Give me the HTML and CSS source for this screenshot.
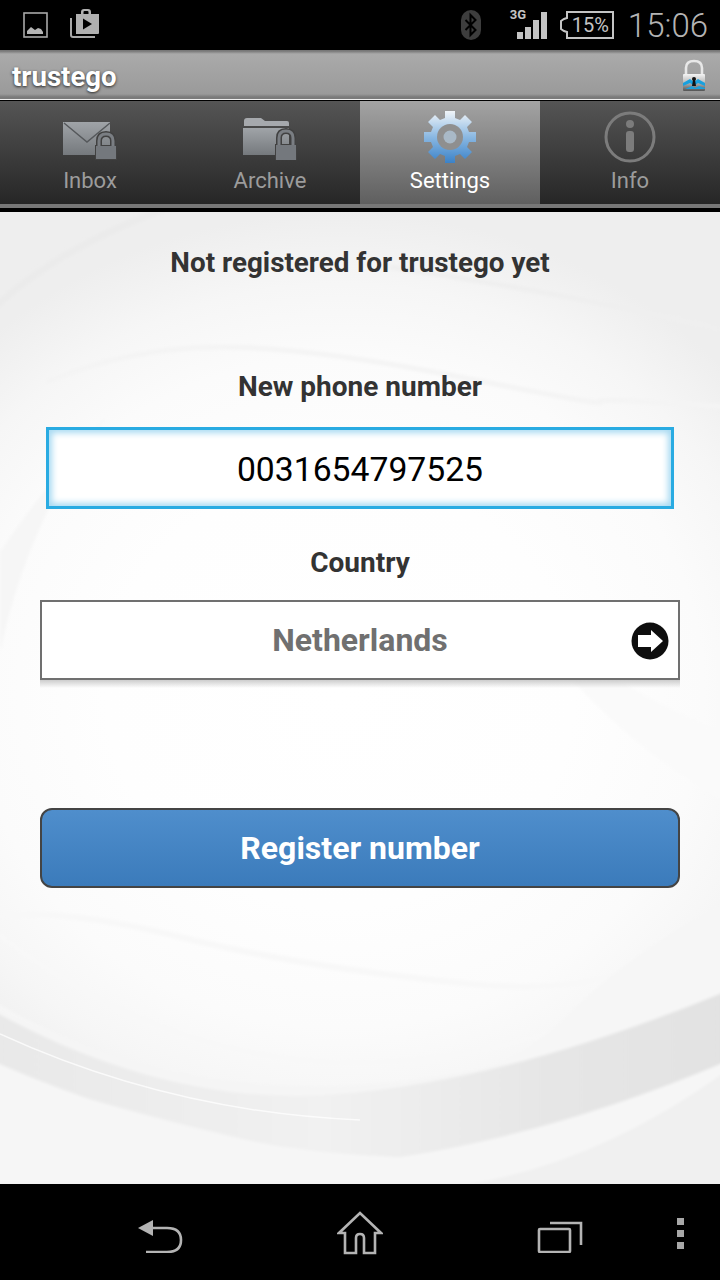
FILE: index.html
```html
<!DOCTYPE html>
<html lang="en">

<head>
    <meta charset="UTF-8" />
    <meta name="viewport" content="width=device-width, initial-scale=1.0" />
    <title>trustego</title>
    <link rel="stylesheet" href="styles.css">
</head>

<body>
    <div class="status_bar">
        <div class="status_left">
            <svg class="ic_picture" width="26" height="26" viewBox="0 0 26 26">
                <rect x="1" y="1" width="23" height="24" fill="none" stroke="#a8a8a8" stroke-width="1.600" />
                <path d="M4 22v-3l4-4 4 3 3-2 3 1 2 3v2z" fill="#b4b4b4" />
            </svg>
            <svg class="ic_store" width="32" height="32" viewBox="0 0 32 32">
                <path d="M2 10v17q0 2 2 2h22" fill="none" stroke="#a8a8a8" stroke-width="2" />
                <path d="M7 6h5V4q0-3 3-3h4q3 0 3 3v2h8v19q0 1-1 1H7z" fill="#b0b0b0" />
                <path d="M14.500 6V4q0-1 1-1h3q1 0 1 1v2z" fill="#000" />
                <path d="M14 10.500l9 5.500-9 5.500z" fill="#000" />
            </svg>
        </div>
        <div class="status_right">
            <svg width="20" height="30" viewBox="0 0 20 30">
                <rect x="0" y="0" width="20" height="30" rx="10" fill="#3d3d3d" />
                <path d="M4.500 10l10 10-5 5V5l5 5-10 10" fill="none" stroke="#000" stroke-width="2" />
            </svg>
            <div class="signal">
                <span class="signal_3g">3G</span>
                <svg width="38" height="30" viewBox="0 0 38 30">
                    <path d="M8 22h6v7H8zM16 17h6v12h-6zM24 10h6v19h-6zM32 2h6v27h-6z" fill="#c4c4c4" />
                </svg>
            </div>
            <div class="battery">
                <svg class="battery_shell" width="54" height="28" viewBox="0 0 54 28">
                    <path d="M7 1h46v26H7v-6l-3-1-3-2V10l3-2 3-1z" fill="none" stroke="#c4c4c4" stroke-width="2" />
                </svg>
                <span class="battery_text">15%</span>
            </div>
            <span class="clock">15:06</span>
        </div>
    </div>

    <header class="title_bar">
        <h1>trustego</h1>
        <svg class="ic_lock" width="26" height="34" viewBox="0 0 26 34">
            <defs>
                <linearGradient id="lockBody" x1="0" y1="0" x2="0" y2="1">
                    <stop offset="0" stop-color="#f4f4f4" />
                    <stop offset="0.45" stop-color="#c0c0c0" />
                    <stop offset="1" stop-color="#555" />
                </linearGradient>
            </defs>
            <path d="M4 16V9q0-7 8-7t8 7v7" fill="none" stroke="#e8e8e8" stroke-width="2.600" />
            <rect x="1" y="15" width="22" height="17" rx="1" fill="url(#lockBody)" />
            <path d="M1 24l7-4 4 3 4-3 7 4v3l-7-3-4 3-4-3-7 3zM3 30l7-3 3 2 4-2 6 2v1H3z" fill="#18a0de" />
            <circle cx="12" cy="20" r="2" fill="#111" />
            <path d="M11 21h2l1 6h-4z" fill="#111" />
        </svg>
    </header>

    <nav class="tabs">
        <div class="tab">
            <svg class="tab_icon" width="56" height="40" viewBox="0 0 56 40">
                <defs>
                    <linearGradient id="tabGray" x1="0" y1="0" x2="0" y2="1">
                        <stop offset="0" stop-color="#a0a4a8" />
                        <stop offset="1" stop-color="#75797d" />
                    </linearGradient>
                </defs>
                <path d="M1 2h47v33H1z" fill="url(#tabGray)" />
                <path d="M2 3l23 19 23-19" fill="none" stroke="#55585b" stroke-width="1.400" />
                <path d="M37 27v-6q0-7 7-7t7 7v6" fill="none" stroke="#414141" stroke-width="6" />
                <rect x="33" y="25" width="22" height="15" fill="#414141" />
                <path d="M37 27v-6q0-7 7-7t7 7v6" fill="none" stroke="#7a7e83" stroke-width="3" />
                <rect x="34" y="26" width="20" height="13" fill="#74787d" />
            </svg>
            <span>Inbox</span>
        </div>
        <div class="tab">
            <svg class="tab_icon" width="56" height="44" viewBox="0 0 56 44">
                <path d="M2 5q0-3 3-3h14l4 3h22q2 0 2 2v3H2z" fill="#a6a9ad" />
                <path d="M1 12h46v27H1z" fill="url(#tabGray)" />
                <path d="M37 30v-8q0-7 7-7t7 7v8" fill="none" stroke="#414141" stroke-width="6" />
                <rect x="33" y="28" width="22" height="16" fill="#414141" />
                <path d="M37 30v-8q0-7 7-7t7 7v8" fill="none" stroke="#7a7e83" stroke-width="3" />
                <rect x="34" y="29" width="20" height="15" fill="#74787d" />
            </svg>
            <span>Archive</span>
        </div>
        <div class="tab tab_active">
            <svg class="tab_icon icon_round" width="54" height="54" viewBox="0 0 54 54">
                <defs>
                    <linearGradient id="gearBlue" x1="0" y1="0" x2="0" y2="1">
                        <stop offset="0" stop-color="#f0f4f8" />
                        <stop offset="0.5" stop-color="#8ab8e2" />
                        <stop offset="1" stop-color="#3b82c8" />
                    </linearGradient>
                </defs>
                <path d="M22 1h10v7l5 2 5-5 7 7-5 5 2 5h7v10h-7l-2 5 5 5-7 7-5-5-5 2v7H22v-7l-5-2-5 5-7-7 5-5-2-5H1V22h7l2-5-5-5 7-7 5 5 5-2z" fill="url(#gearBlue)" />
                <circle cx="27" cy="27" r="13" fill="#8f8f8f" />
                <circle cx="27" cy="27" r="6.500" fill="#a9b9c7" />
            </svg>
            <span>Settings</span>
        </div>
        <div class="tab">
            <svg class="tab_icon icon_round" width="54" height="54" viewBox="0 0 54 54">
                <circle cx="27" cy="27" r="24" fill="none" stroke="#7c7c7c" stroke-width="3" />
                <circle cx="27" cy="14" r="4" fill="#7c7c7c" />
                <rect x="23" y="21" width="8" height="21" rx="3" fill="#7c7c7c" />
            </svg>
            <span>Info</span>
        </div>
    </nav>

    <main class="content">
        <svg class="swirl" width="720" height="972" viewBox="0 0 720 972">
            <defs>
                <radialGradient id="swirlBase" gradientUnits="userSpaceOnUse" cx="340" cy="480" r="1" gradientTransform="translate(340 480) scale(520 480) translate(-340 -480)">
                    <stop offset="0" stop-color="#fff" />
                    <stop offset="0.45" stop-color="#fefefe" />
                    <stop offset="0.7" stop-color="#fbfbfb" />
                    <stop offset="0.85" stop-color="#f6f6f6" />
                    <stop offset="1" stop-color="#eeeeee" />
                </radialGradient>
                <linearGradient id="swirlFade" x1="0" y1="0" x2="1" y2="0">
                    <stop offset="0" stop-color="#e8e8e8" />
                    <stop offset="0.45" stop-color="#f1f1f1" />
                    <stop offset="0.75" stop-color="#e6e6e6" />
                    <stop offset="1" stop-color="#e2e2e2" />
                </linearGradient>
                <filter id="swirlBlur" x="-5%" y="-5%" width="110%" height="110%">
                    <feGaussianBlur stdDeviation="1.500" />
                </filter>
            </defs>
            <rect width="720" height="972" fill="url(#swirlBase)" />
            <g filter="url(#swirlBlur)">
                <!-- upper swirls -->
                <path d="M-5 95Q60 35 170 -5" fill="none" stroke="#ebebeb" stroke-width="7" />
                <path d="M390 55Q560 80 725 118" fill="none" stroke="#efefef" stroke-width="5" />
                <path d="M46 170Q130 135 220 135T460 165T600 190T725 195" fill="none" stroke="#f4f4f4" stroke-width="5" />
                <path d="M0 440Q30 300 110 200Q40 280 0 340z" fill="#f6f6f6" />
                <path d="M520 400Q620 480 725 520V590Q600 520 520 400z" fill="#fafafa" />
                <!-- thin lower lines -->
                <path d="M-5 705Q60 695 180 725T470 772T725 700" fill="none" stroke="#f8f8f8" stroke-width="6" />
                <path d="M-5 720Q180 860 380 850T725 730" fill="none" stroke="#f8f8f8" stroke-width="5" />
                <!-- lower bands -->
                <path d="M-5 790Q150 880 320 880T560 810T725 690V780Q600 900 430 930T-5 830z" fill="#f6f6f6" />
                <path d="M-5 795Q140 870 300 874Q460 880 725 790V972H-5z" fill="#f5f5f5" />
                <path d="M-5 800Q150 885 300 884Q480 880 725 780V860Q560 970 430 960T-5 860z" fill="url(#swirlFade)" />
                <path d="M-5 850Q200 940 400 945Q560 920 725 850V972H-5z" fill="#f6f6f6" />
                <path d="M725 860Q600 950 470 972H725z" fill="#f0f0f0" />
            </g>
            <path d="M0 822Q170 900 360 908" fill="none" stroke="#fff" stroke-width="1.500" stroke-opacity="0.75" />
        </svg>

        <h2 class="intro">Not registered for trustego yet</h2>

        <label class="field_label label_phone">New phone number</label>
        <div class="phone_input">0031654797525</div>

        <label class="field_label label_country">Country</label>
        <div class="country_select">
            <span>Netherlands</span>
            <svg class="ic_arrow" width="38" height="38" viewBox="0 0 38 38">
                <circle cx="19" cy="19" r="18.500" fill="#0e0e0e" />
                <path d="M7 13h13V8l12 11-12 11v-5H7z" fill="#fff" />
            </svg>
        </div>

        <button class="register_btn">Register number</button>
    </main>

    <div class="nav_bar">
        <svg class="nav_icon nav_back" width="46" height="34" viewBox="0 0 46 34">
            <path d="M1 9L16 1v16z" fill="#b4b4b4" />
            <path d="M14 9h16q14 0 14 12t-14 12H9" fill="none" stroke="#b4b4b4" stroke-width="2.600" />
        </svg>
        <svg class="nav_icon nav_home" width="46" height="44" viewBox="0 0 46 44">
            <path d="M8 22H2L23 2l21 20h-6v20H27V27q0-4-4-4t-4 4v15H8z" fill="none" stroke="#b4b4b4" stroke-width="2.600" />
        </svg>
        <svg class="nav_icon nav_recent" width="46" height="32" viewBox="0 0 46 32">
            <rect x="2" y="8" width="31" height="23" rx="1" fill="none" stroke="#b4b4b4" stroke-width="2.600" />
            <path d="M13 2h31v22" fill="none" stroke="#b4b4b4" stroke-width="2.600" />
        </svg>
        <div class="nav_menu">
            <span></span>
            <span></span>
            <span></span>
        </div>
    </div>
</body>

</html>
```

FILE: styles.css
```css
body {
    margin: 0;
    width: 720px;
    height: 1280px;
    overflow: hidden;
    font-family: Roboto, sans-serif;
    background-color: #000;
}

/* status bar */
.status_bar {
    display: flex;
    justify-content: space-between;
    align-items: center;
    height: 50px;
    background-color: #000;
}

.status_left {
    display: flex;
    align-items: center;
    gap: 20px;
    padding-left: 23px;
}

.ic_store {
    margin-top: -2px;
}

.status_right {
    display: flex;
    align-items: center;
    padding-right: 12px;
}

.signal {
    position: relative;
    margin-left: 28px;
}

.signal svg {
    display: block;
}

.signal_3g {
    position: absolute;
    left: 1px;
    top: -3px;
    font-size: 13px;
    font-weight: bold;
    color: #c4c4c4;
}

.battery {
    position: relative;
    width: 54px;
    height: 28px;
    margin-left: 13px;
}

.battery_shell {
    display: block;
}

.battery_text {
    position: absolute;
    left: 12px;
    top: 0;
    line-height: 28px;
    font-size: 20px;
    color: #c4c4c4;
}

.clock {
    margin-left: 14px;
    font-size: 33px;
    font-weight: 300;
    color: #b4b4b4;
}

/* title bar */
.title_bar {
    display: flex;
    justify-content: space-between;
    align-items: center;
    box-sizing: border-box;
    height: 51px;
    padding: 2px 12px 0 12px;
    background: linear-gradient(#777 0, #777 1px, #aaa 4px, #9a9a9a 44px, #7a7a7a 47px);
    border-bottom: 1px solid #000;
    box-shadow: inset 0 -1px 0 #eee;
}

.title_bar h1 {
    margin: 0;
    font-size: 27.600px;
    font-weight: bold;
    color: #fff;
    text-shadow: 0 1px 3px #222;
}

/* tabs */
.tabs {
    display: grid;
    grid-template-columns: repeat(4, 180px);
    height: 103px;
    background: linear-gradient(#555, #262626);
    border-bottom: 4px solid #777;
}

.tab {
    display: flex;
    flex-direction: column;
    align-items: center;
    justify-content: flex-end;
    padding-bottom: 10px;
    font-size: 22px;
    line-height: 26px;
    color: #9c9c9c;
}

.tab_icon {
    margin-bottom: 8px;
}

.tab_icon.icon_round {
    margin-bottom: 4px;
}

.tab_active {
    background: linear-gradient(#a3a3a3, #5f5f5f);
    color: #fff;
}

/* content */
.content {
    position: relative;
    display: flex;
    flex-direction: column;
    align-items: center;
    box-sizing: border-box;
    height: 976px;
    border-top: 4px solid #000;
    color: #333;
}

.swirl {
    position: absolute;
    left: 0;
    top: 0;
}

.intro,
.field_label,
.phone_input,
.country_select,
.register_btn {
    position: relative;
}

.intro {
    margin: 35px 0 0;
    font-size: 27.800px;
    line-height: 32px;
}

.field_label {
    font-size: 28px;
    font-weight: bold;
    line-height: 32px;
}

.label_phone {
    margin-top: 92px;
}

.phone_input {
    box-sizing: border-box;
    width: 628px;
    height: 82px;
    margin-top: 24px;
    border: 3px solid #29abe2;
    background-color: #fff;
    box-shadow: inset 0 0 6px 3px #a8daf2;
    text-align: center;
    line-height: 80px;
    font-size: 33.700px;
    color: #000;
}

.label_country {
    margin-top: 38px;
}

.country_select {
    display: flex;
    justify-content: center;
    align-items: center;
    box-sizing: border-box;
    width: 640px;
    height: 80px;
    margin-top: 21px;
    border: 2px solid #707070;
    background-color: #fff;
    font-size: 32px;
    font-weight: bold;
    color: #707070;
}

/* shadow strip under the select */
.country_select::after {
    content: "";
    position: absolute;
    left: -2px;
    right: -2px;
    top: calc(100% + 2px);
    height: 8px;
    background: linear-gradient(#cdcdcd, rgba(220, 220, 220, 0));
}

.ic_arrow {
    position: absolute;
    right: 9px;
    top: 20px;
}

.register_btn {
    width: 640px;
    height: 80px;
    margin-top: 128px;
    border: 2px solid #444;
    border-radius: 12px;
    background: linear-gradient(#4f8ecc, #3b7bbb);
    font-family: inherit;
    font-size: 32px;
    font-weight: bold;
    color: #fff;
}

/* navigation bar */
.nav_bar {
    position: relative;
    height: 96px;
    background-color: #000;
}

.nav_icon {
    position: absolute;
}

.nav_back {
    left: 137px;
    top: 35px;
}

.nav_home {
    left: 337px;
    top: 27px;
}

.nav_recent {
    left: 537px;
    top: 37px;
}

.nav_menu {
    position: absolute;
    left: 677px;
    top: 34px;
    display: flex;
    flex-direction: column;
    gap: 5px;
}

.nav_menu span {
    width: 7px;
    height: 7px;
    background-color: #a8a8a8;
}
```
